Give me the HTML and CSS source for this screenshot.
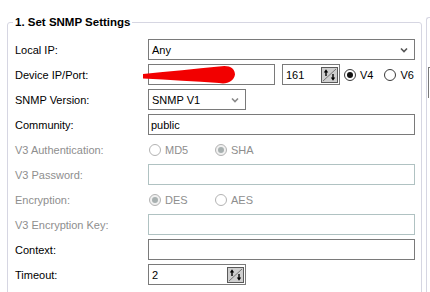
FILE: index.html
```html
<!DOCTYPE html>
<html lang="en">
<head>
    <meta charset="UTF-8">
    <title>SNMP Settings</title>
    <link rel="stylesheet" href="styles.css">
</head>
<body>
    <div class="page">
        <fieldset class="group">
            <legend>1. Set SNMP Settings</legend>
            <div class="form">
                <span class="label">Local IP:</span>
                <div class="select wide">
                    <span>Any</span>
                    <svg class="chevron" width="8" height="6" viewBox="0 0 8 6"><path d="M1 1.5 L4 4.5 L7 1.5" fill="none" stroke="#555" stroke-width="1.6"/></svg>
                </div>

                <span class="label">Device IP/Port:</span>
                <div class="device">
                    <div class="input ip"></div>
                    <svg class="redact" width="96" height="22" viewBox="0 0 96 22"><path d="M0 10 Q40 6 76 2.5 C86 0.5 92 4 92 10.5 C91 17.5 84 20.5 76 19 Q40 16.5 0 14.5 Z" fill="#f20000"/></svg>
                    <div class="spinner port">
                        <span>161</span>
                        <svg class="spin-btn" width="17" height="16" viewBox="0 0 17 16">
                            <rect x="0.5" y="0.5" width="16" height="15" fill="#cfcfcf" stroke="#5a5a5a"/>
                            <path d="M2 14 L15 2" stroke="#777" stroke-width="1"/>
                            <path d="M5 4 V9" stroke="#000" stroke-width="1.4"/>
                            <path d="M2.8 5.5 L5 2.2 L7.2 5.5 Z" fill="#000"/>
                            <path d="M12 7 V12" stroke="#000" stroke-width="1.4"/>
                            <path d="M9.8 10.5 L12 13.8 L14.2 10.5 Z" fill="#000"/>
                        </svg>
                    </div>
                    <span class="radio checked"></span><span class="radio-text">V4</span>
                    <span class="radio v6"></span><span class="radio-text">V6</span>
                </div>

                <span class="label">SNMP Version:</span>
                <div class="select short">
                    <span>SNMP V1</span>
                    <svg class="chevron" width="8" height="6" viewBox="0 0 8 6"><path d="M1 1.5 L4 4.5 L7 1.5" fill="none" stroke="#888" stroke-width="1.6"/></svg>
                </div>

                <span class="label">Community:</span>
                <div class="input wide"><span>public</span></div>

                <span class="label off">V3 Authentication:</span>
                <div class="choices off">
                    <span class="option"><span class="radio"></span><span class="radio-text">MD5</span></span>
                    <span class="option"><span class="radio checked"></span><span class="radio-text">SHA</span></span>
                </div>

                <span class="label off">V3 Password:</span>
                <div class="input wide off"></div>

                <span class="label off">Encryption:</span>
                <div class="choices off">
                    <span class="option"><span class="radio checked"></span><span class="radio-text">DES</span></span>
                    <span class="option"><span class="radio"></span><span class="radio-text">AES</span></span>
                </div>

                <span class="label off">V3 Encryption Key:</span>
                <div class="input wide off"></div>

                <span class="label">Context:</span>
                <div class="input wide"></div>

                <span class="label">Timeout:</span>
                <div class="spinner short">
                    <span>2</span>
                    <svg class="spin-btn" width="17" height="16" viewBox="0 0 17 16">
                        <rect x="0.5" y="0.5" width="16" height="15" fill="#cfcfcf" stroke="#5a5a5a"/>
                        <path d="M2 14 L15 2" stroke="#777" stroke-width="1"/>
                        <path d="M5 4 V9" stroke="#000" stroke-width="1.4"/>
                        <path d="M2.8 5.5 L5 2.2 L7.2 5.5 Z" fill="#000"/>
                        <path d="M12 7 V12" stroke="#000" stroke-width="1.4"/>
                        <path d="M9.8 10.5 L12 13.8 L14.2 10.5 Z" fill="#000"/>
                    </svg>
                </div>
            </div>
        </fieldset>

        <div class="side">
            <div class="side-box"></div>
        </div>
    </div>
</body>
</html>
```

FILE: styles.css
```css
body {
    margin: 0;
    font-family: "Liberation Sans", Arial, sans-serif;
    font-size: 11px;
    color: #000;
    background-color: #fff;
    overflow: hidden;
}
.page {
    display: flex;
    align-items: flex-start;
    height: 292px;
    overflow: hidden;
}
.group {
    box-sizing: border-box;
    width: 415px;
    height: 300px;
    margin: 16px 0 0 7px;
    padding: 8px 6px 0 5px;
    border: 1px solid #d6d6e2;
    border-radius: 3px;
    min-width: 0;
}
.group legend {
    padding: 0 2px;
    font-size: 11.5px;
    font-weight: bold;
    line-height: 13px;
}
.form {
    display: grid;
    grid-template-columns: 135px 267px;
    grid-auto-rows: 25px;
    align-items: center;
}
.label {
    padding-left: 2px;
}
.label.off,
.off .radio-text {
    color: #8e8e8e;
}
.input,
.select,
.spinner {
    box-sizing: border-box;
    height: 21px;
    border: 1px solid #7a7a7a;
    background-color: #fff;
    display: flex;
    align-items: center;
    padding-left: 2px;
}
.input.off {
    border-color: #b0c2c2;
}
.wide {
    width: 267px;
}
.short {
    width: 98px;
}
.select {
    justify-content: space-between;
    padding: 0 6px 0 3px;
}
.chevron {
    display: block;
}
.device {
    position: relative;
    display: flex;
    align-items: center;
}
.ip {
    width: 127px;
}
.redact {
    position: absolute;
    left: -5px;
    top: 0;
}
.spinner {
    justify-content: space-between;
    padding: 0 1px 0 3px;
}
.port {
    width: 58px;
    margin: 0 4px 0 7px;
}
.spin-btn {
    display: block;
}
.radio {
    box-sizing: border-box;
    display: inline-flex;
    align-items: center;
    justify-content: center;
    width: 12px;
    height: 12px;
    border: 1px solid #3a3a3a;
    border-radius: 50%;
    background-color: #fff;
}
.radio.checked::after {
    content: "";
    width: 6px;
    height: 6px;
    border-radius: 50%;
    background-color: #111;
}
.radio-text {
    margin-left: 4px;
}
.v6 {
    margin-left: 11px;
}
.choices {
    display: flex;
    align-items: center;
    padding-left: 1px;
}
.option {
    display: flex;
    align-items: center;
    width: 66px;
}
.off .radio {
    border-color: #b3b3b3;
}
.off .radio.checked {
    background-color: #f0f0f0;
}
.off .radio.checked::after {
    background-color: #a8b0b0;
}
.side {
    flex: 1;
    margin: 17px 0 0 4px;
    height: 275px;
    border-left: 1px solid #d6d6e2;
    border-top: 1px solid #d6d6e2;
    border-top-left-radius: 3px;
}
.side-box {
    margin: 49px 0 0 1px;
    height: 30px;
    border-left: 1px solid #7a7a7a;
    border-top: 1px solid #7a7a7a;
}
```
